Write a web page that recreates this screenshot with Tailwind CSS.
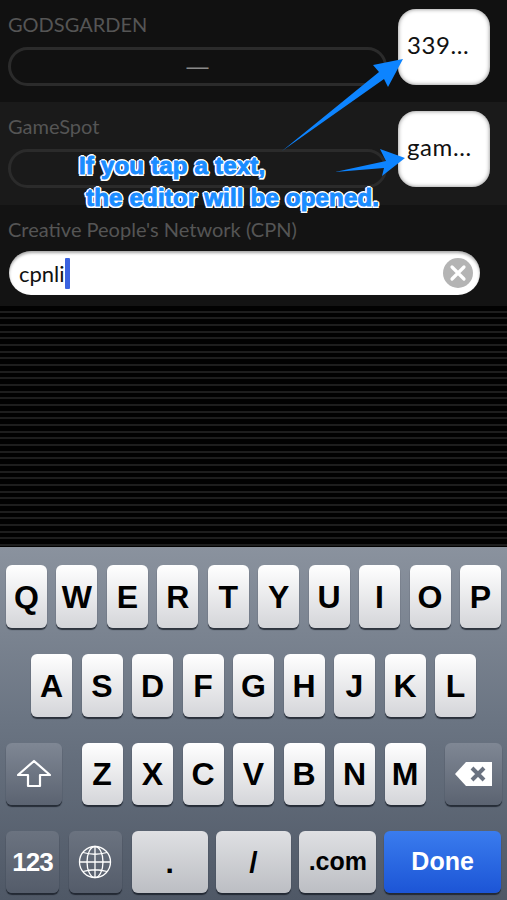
<!DOCTYPE html>
<html lang="en">
<head>
  <meta charset="utf-8"/>
  <meta name="viewport" content="width=device-width,initial-scale=1.0"/>
  <title>Editor</title>
  <script src="https://cdn.jsdelivr.net/npm/@tailwindcss/browser@4"></script>
</head>
<body class="bg-black font-['Liberation_Sans',sans-serif]">
  <div class="relative w-[507px] h-[900px] overflow-hidden flex flex-col">

    <!-- rows -->
    <div class="h-[102px] bg-[#111111] flex pl-2 pr-[17px] pt-[9px] gap-[11px]">
      <div class="flex-1 min-w-0">
        <div class="font-['Lato',sans-serif] text-[20px] leading-[31px] text-[#555555]">GODSGARDEN</div>
        <div class="mt-[7px] h-[39px] rounded-full border-[3px] border-[#2b2b2b] flex items-center justify-center text-[#8a8a8a] text-[22px]">—</div>
      </div>
      <div class="w-[92px] h-[76px] rounded-[18px] bg-white shadow-[inset_0_0_4px_rgba(0,0,0,0.5)] flex items-center pl-[9px] pb-[5px] text-[24px] text-[#111] font-['Lato',sans-serif] tracking-[0.6px]">339...</div>
    </div>
    <div class="h-[103px] bg-[#1a1a1a] flex pl-2 pr-[17px] pt-[9px] gap-[11px]">
      <div class="flex-1 min-w-0">
        <div class="font-['Lato',sans-serif] text-[20px] leading-[31px] text-[#555555]">GameSpot</div>
        <div class="mt-[7px] h-[39px] rounded-full border-[3px] border-[#2b2b2b]"></div>
      </div>
      <div class="w-[92px] h-[76px] rounded-[18px] bg-white shadow-[inset_0_0_4px_rgba(0,0,0,0.5)] flex items-center pl-[9px] pb-[4px] text-[24px] text-[#111] font-['Lato',sans-serif] tracking-[0.6px]">gam...</div>
    </div>
    <div class="h-[101px] bg-[#131313] pl-[9px] pr-[27px] pt-[9px]">
      <div class="-ml-px font-['Lato',sans-serif] text-[20px] leading-[31px] text-[#555555]">Creative People's Network (CPN)</div>
      <div class="mt-[6px] h-[44px] rounded-full bg-white flex items-center pl-[10px] pr-[7px] shadow-[inset_0_2px_3px_rgba(0,0,0,0.35)]">
        <span class="font-['Lato',sans-serif] text-[22px] text-[#111]">cpnli</span>
        <span class="w-[5px] h-[31px] bg-[#3b63e0] rounded-[1px]"></span>
        <span class="ml-auto w-[30px] h-[30px] rounded-full bg-[#b4b4b4] flex items-center justify-center">
          <svg width="18" height="18" viewBox="0 0 18 18"><path d="M3 3 L15 15 M15 3 L3 15" stroke="#fff" stroke-width="3.2" stroke-linecap="round"/></svg>
        </span>
      </div>
    </div>

    <!-- striped empty area -->
    <div class="flex-1 bg-[repeating-linear-gradient(to_bottom,#020202_0px,#020202_4.67px,#1e1e1e_4.67px,#1e1e1e_6.67px)]"></div>

    <!-- keyboard -->
    <div class="h-[353px] border-t border-[#8b929c] bg-[linear-gradient(to_bottom,#8a929e_0%,#6a7482_50%,#4f5866_100%)] pt-[17px] flex flex-col gap-[26px]">
      <div class="flex justify-between px-[6px] h-[63px]">
        <div class="w-[41px] rounded-[6px] bg-[linear-gradient(to_bottom,#ffffff,#d4d5d9)] shadow-[0_2px_1px_rgba(20,25,35,0.75)] flex items-center justify-center text-[32px] font-bold text-black">Q</div>
        <div class="w-[41px] rounded-[6px] bg-[linear-gradient(to_bottom,#ffffff,#d4d5d9)] shadow-[0_2px_1px_rgba(20,25,35,0.75)] flex items-center justify-center text-[32px] font-bold text-black">W</div>
        <div class="w-[41px] rounded-[6px] bg-[linear-gradient(to_bottom,#ffffff,#d4d5d9)] shadow-[0_2px_1px_rgba(20,25,35,0.75)] flex items-center justify-center text-[32px] font-bold text-black">E</div>
        <div class="w-[41px] rounded-[6px] bg-[linear-gradient(to_bottom,#ffffff,#d4d5d9)] shadow-[0_2px_1px_rgba(20,25,35,0.75)] flex items-center justify-center text-[32px] font-bold text-black">R</div>
        <div class="w-[41px] rounded-[6px] bg-[linear-gradient(to_bottom,#ffffff,#d4d5d9)] shadow-[0_2px_1px_rgba(20,25,35,0.75)] flex items-center justify-center text-[32px] font-bold text-black">T</div>
        <div class="w-[41px] rounded-[6px] bg-[linear-gradient(to_bottom,#ffffff,#d4d5d9)] shadow-[0_2px_1px_rgba(20,25,35,0.75)] flex items-center justify-center text-[32px] font-bold text-black">Y</div>
        <div class="w-[41px] rounded-[6px] bg-[linear-gradient(to_bottom,#ffffff,#d4d5d9)] shadow-[0_2px_1px_rgba(20,25,35,0.75)] flex items-center justify-center text-[32px] font-bold text-black">U</div>
        <div class="w-[41px] rounded-[6px] bg-[linear-gradient(to_bottom,#ffffff,#d4d5d9)] shadow-[0_2px_1px_rgba(20,25,35,0.75)] flex items-center justify-center text-[32px] font-bold text-black">I</div>
        <div class="w-[41px] rounded-[6px] bg-[linear-gradient(to_bottom,#ffffff,#d4d5d9)] shadow-[0_2px_1px_rgba(20,25,35,0.75)] flex items-center justify-center text-[32px] font-bold text-black">O</div>
        <div class="w-[41px] rounded-[6px] bg-[linear-gradient(to_bottom,#ffffff,#d4d5d9)] shadow-[0_2px_1px_rgba(20,25,35,0.75)] flex items-center justify-center text-[32px] font-bold text-black">P</div>
      </div>
      <div class="flex justify-between px-[31px] h-[63px]">
        <div class="w-[41px] rounded-[6px] bg-[linear-gradient(to_bottom,#ffffff,#d4d5d9)] shadow-[0_2px_1px_rgba(20,25,35,0.75)] flex items-center justify-center text-[32px] font-bold text-black">A</div>
        <div class="w-[41px] rounded-[6px] bg-[linear-gradient(to_bottom,#ffffff,#d4d5d9)] shadow-[0_2px_1px_rgba(20,25,35,0.75)] flex items-center justify-center text-[32px] font-bold text-black">S</div>
        <div class="w-[41px] rounded-[6px] bg-[linear-gradient(to_bottom,#ffffff,#d4d5d9)] shadow-[0_2px_1px_rgba(20,25,35,0.75)] flex items-center justify-center text-[32px] font-bold text-black">D</div>
        <div class="w-[41px] rounded-[6px] bg-[linear-gradient(to_bottom,#ffffff,#d4d5d9)] shadow-[0_2px_1px_rgba(20,25,35,0.75)] flex items-center justify-center text-[32px] font-bold text-black">F</div>
        <div class="w-[41px] rounded-[6px] bg-[linear-gradient(to_bottom,#ffffff,#d4d5d9)] shadow-[0_2px_1px_rgba(20,25,35,0.75)] flex items-center justify-center text-[32px] font-bold text-black">G</div>
        <div class="w-[41px] rounded-[6px] bg-[linear-gradient(to_bottom,#ffffff,#d4d5d9)] shadow-[0_2px_1px_rgba(20,25,35,0.75)] flex items-center justify-center text-[32px] font-bold text-black">H</div>
        <div class="w-[41px] rounded-[6px] bg-[linear-gradient(to_bottom,#ffffff,#d4d5d9)] shadow-[0_2px_1px_rgba(20,25,35,0.75)] flex items-center justify-center text-[32px] font-bold text-black">J</div>
        <div class="w-[41px] rounded-[6px] bg-[linear-gradient(to_bottom,#ffffff,#d4d5d9)] shadow-[0_2px_1px_rgba(20,25,35,0.75)] flex items-center justify-center text-[32px] font-bold text-black">K</div>
        <div class="w-[41px] rounded-[6px] bg-[linear-gradient(to_bottom,#ffffff,#d4d5d9)] shadow-[0_2px_1px_rgba(20,25,35,0.75)] flex items-center justify-center text-[32px] font-bold text-black">L</div>
      </div>
      <div class="flex justify-between pl-[6px] pr-[5px] h-[62px]">
        <div class="w-[56px] rounded-[6px] bg-[linear-gradient(to_bottom,#7f8794,#5b6371)] shadow-[0_2px_1px_rgba(20,25,35,0.75)] flex items-center justify-center">
          <svg width="34" height="30" viewBox="0 0 34 30"><path d="M17 2 L33 16 L23 16 L23 27 L11 27 L11 16 L1 16 Z" fill="none" stroke="#fff" stroke-width="2.2" stroke-linejoin="round"/></svg>
        </div>
        <div class="flex gap-[9.5px]">
          <div class="w-[41px] rounded-[6px] bg-[linear-gradient(to_bottom,#ffffff,#d4d5d9)] shadow-[0_2px_1px_rgba(20,25,35,0.75)] flex items-center justify-center text-[32px] font-bold text-black">Z</div>
          <div class="w-[41px] rounded-[6px] bg-[linear-gradient(to_bottom,#ffffff,#d4d5d9)] shadow-[0_2px_1px_rgba(20,25,35,0.75)] flex items-center justify-center text-[32px] font-bold text-black">X</div>
          <div class="w-[41px] rounded-[6px] bg-[linear-gradient(to_bottom,#ffffff,#d4d5d9)] shadow-[0_2px_1px_rgba(20,25,35,0.75)] flex items-center justify-center text-[32px] font-bold text-black">C</div>
          <div class="w-[41px] rounded-[6px] bg-[linear-gradient(to_bottom,#ffffff,#d4d5d9)] shadow-[0_2px_1px_rgba(20,25,35,0.75)] flex items-center justify-center text-[32px] font-bold text-black">V</div>
          <div class="w-[41px] rounded-[6px] bg-[linear-gradient(to_bottom,#ffffff,#d4d5d9)] shadow-[0_2px_1px_rgba(20,25,35,0.75)] flex items-center justify-center text-[32px] font-bold text-black">B</div>
          <div class="w-[41px] rounded-[6px] bg-[linear-gradient(to_bottom,#ffffff,#d4d5d9)] shadow-[0_2px_1px_rgba(20,25,35,0.75)] flex items-center justify-center text-[32px] font-bold text-black">N</div>
          <div class="w-[41px] rounded-[6px] bg-[linear-gradient(to_bottom,#ffffff,#d4d5d9)] shadow-[0_2px_1px_rgba(20,25,35,0.75)] flex items-center justify-center text-[32px] font-bold text-black">M</div>
        </div>
        <div class="w-[57px] rounded-[6px] bg-[linear-gradient(to_bottom,#7f8794,#5b6371)] shadow-[0_2px_1px_rgba(20,25,35,0.75)] flex items-center justify-center">
          <svg width="40" height="28" viewBox="0 0 40 28"><path d="M1 14 L12 2 H38 V26 H12 Z" fill="#fff"/><path d="M18 8 L30 20 M30 8 L18 20" stroke="#6a7280" stroke-width="4"/></svg>
        </div>
      </div>
      <div class="flex px-[6px] h-[62px]">
        <div class="w-[53px] rounded-[6px] bg-[linear-gradient(to_bottom,#6b7380,#545c6a)] shadow-[0_2px_1px_rgba(20,25,35,0.75)] flex items-center justify-center text-white text-[26px] font-bold tracking-[-1px]">123</div>
        <div class="ml-[10px] w-[53px] rounded-[6px] bg-[linear-gradient(to_bottom,#6b7380,#545c6a)] shadow-[0_2px_1px_rgba(20,25,35,0.75)] flex items-center justify-center">
          <svg width="34" height="34" viewBox="0 0 34 34" fill="none" stroke="#fff" stroke-width="1.3"><circle cx="17" cy="17" r="15.5"/><ellipse cx="17" cy="17" rx="8" ry="15.5"/><path d="M17 1.5 V32.5 M1.5 17 H32.5 M5 7.5 Q17 11 29 7.5 M5 26.5 Q17 23 29 26.5"/></svg>
        </div>
        <div class="ml-[10px] w-[76px] rounded-[6px] bg-[linear-gradient(to_bottom,#dfe0e3,#bcbec3)] shadow-[0_2px_1px_rgba(20,25,35,0.75)] flex items-center justify-center text-[30px] font-bold text-black">.</div>
        <div class="ml-[8px] w-[76px] rounded-[6px] bg-[linear-gradient(to_bottom,#dfe0e3,#bcbec3)] shadow-[0_2px_1px_rgba(20,25,35,0.75)] flex items-center justify-center text-[30px] font-bold text-black">/</div>
        <div class="ml-[8px] w-[77px] rounded-[6px] bg-[linear-gradient(to_bottom,#dfe0e3,#bcbec3)] shadow-[0_2px_1px_rgba(20,25,35,0.75)] flex items-center justify-center text-[25px] font-bold text-black">.com</div>
        <div class="ml-[8px] w-[117px] rounded-[6px] bg-[linear-gradient(to_bottom,#3a7cee,#1c55d6)] shadow-[0_2px_1px_rgba(20,25,35,0.75)] flex items-center justify-center text-[25px] font-bold text-white">Done</div>
      </div>
    </div>

    <!-- annotation overlay -->
    <svg class="absolute left-0 top-0" width="507" height="210" viewBox="0 0 507 210">
      <path d="M282 151 L379 72 L373 65 L403 59 L388 87 L384 79 Z" fill="#0d84ff"/>
      <path d="M335 172 L386 161 L380 149 L405 158 L382 176 L384 168 Z" fill="#0d84ff"/>
    </svg>
    <div class="absolute left-[79px] top-[150px] text-[24px] leading-[32px] tracking-[0.2px] font-bold text-[#1a8cff] [-webkit-text-stroke:1px_#1a8cff] [text-shadow:2px_0_0_#fff,-2px_0_0_#fff,0_2px_0_#fff,0_-2px_0_#fff,1.5px_1.5px_0_#fff,-1.5px_1.5px_0_#fff,1.5px_-1.5px_0_#fff,-1.5px_-1.5px_0_#fff]">If you tap a text,</div>
    <div class="absolute left-[86px] top-[182px] text-[24px] leading-[32px] tracking-[0.2px] font-bold text-[#1a8cff] [-webkit-text-stroke:1px_#1a8cff] [text-shadow:2px_0_0_#fff,-2px_0_0_#fff,0_2px_0_#fff,0_-2px_0_#fff,1.5px_1.5px_0_#fff,-1.5px_1.5px_0_#fff,1.5px_-1.5px_0_#fff,-1.5px_-1.5px_0_#fff]">the editor will be opened.</div>
  </div>
</body>
</html>
